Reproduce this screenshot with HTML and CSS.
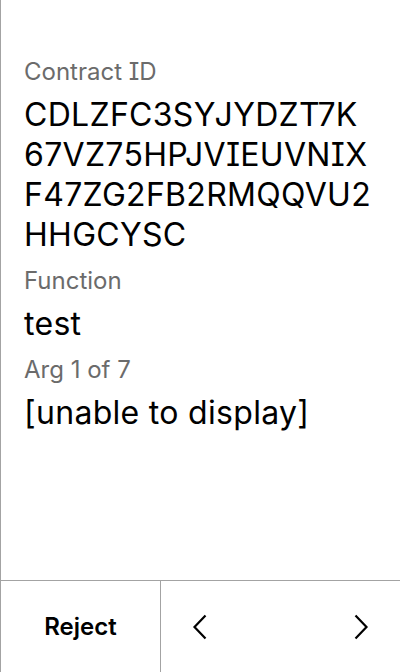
FILE: index.html
```html
<!DOCTYPE html>
<html>
<head>
<meta charset="utf-8">
<link rel="stylesheet" href="styles.css">
</head>
<body>
<div class="screen">
  <div class="content">
    <div class="field">
      <div class="label">Contract ID</div>
      <div class="value">CDLZFC3SYJYDZT7K<br>67VZ75HPJVIEUVNIX<br>F47ZG2FB2RMQQVU2<br>HHGCYSC</div>
    </div>
    <div class="field">
      <div class="label">Function</div>
      <div class="value">test</div>
    </div>
    <div class="field">
      <div class="label">Arg 1 of 7</div>
      <div class="value">[unable to display]</div>
    </div>
  </div>
  <div class="footer">
    <div class="reject">Reject</div>
    <div class="nav">
      <svg class="chev" width="16" height="26" viewBox="0 0 16 26"><path d="M13.5 1.5 L2.5 13 L13.5 24.5" fill="none" stroke="#000" stroke-width="2.2"/></svg>
      <svg class="chev" width="16" height="26" viewBox="0 0 16 26"><path d="M2.5 1.5 L13.5 13 L2.5 24.5" fill="none" stroke="#000" stroke-width="2.2"/></svg>
    </div>
  </div>
</div>
</body>
</html>
```
FILE: styles.css
```css
html, body {
  margin: 0;
  padding: 0;
  background: #fff;
}
body {
  font-family: Inter, "Noto Sans", sans-serif;
  font-feature-settings: "cv08" 1;
  color: #000;
}
.screen {
  width: 400px;
  height: 672px;
  box-sizing: border-box;
  border-left: 1px solid #a3a3a3;
  display: flex;
  flex-direction: column;
}
.content {
  flex: 1;
  padding: 57px 23px 0 23px;
  display: flex;
  flex-direction: column;
  gap: 11px;
}
.label {
  font-size: 24px;
  line-height: 30px;
  color: #6b6b6b;
  margin-bottom: 8px;
}
.value {
  font-size: 32px;
  line-height: 40px;
  letter-spacing: 0.3px;
}
.footer {
  height: 92px;
  border-top: 1px solid #a3a3a3;
  box-sizing: border-box;
  display: flex;
}
.reject {
  width: 159px;
  border-right: 1px solid #a3a3a3;
  display: flex;
  align-items: center;
  justify-content: center;
  font-size: 24px;
  font-weight: 600;
  padding-bottom: 1px;
}
.nav {
  flex: 1;
  display: flex;
  align-items: center;
  justify-content: space-between;
  padding: 0 31px 0 31px;
}
```
